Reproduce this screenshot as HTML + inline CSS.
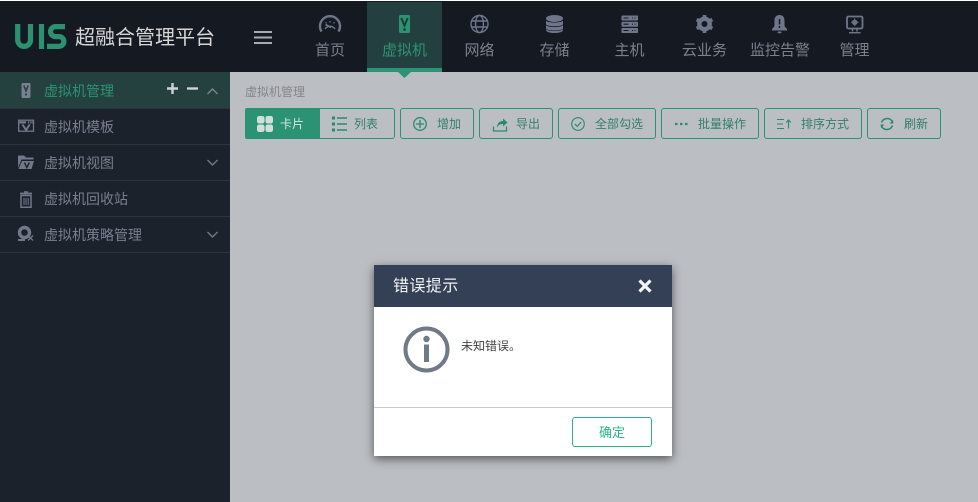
<!DOCTYPE html>
<html lang="zh"><head><meta charset="utf-8"><title>超融合管理平台</title>
<style>
html,body{margin:0;padding:0;width:978px;height:502px;overflow:hidden;background:#fff}
body{position:relative;font-family:"Liberation Sans","Noto Sans CJK SC",sans-serif;font-size:12px}
div,span{position:absolute;box-sizing:border-box;white-space:nowrap}
.nav{top:42px;width:80px;margin-left:-40px;text-align:center;font-size:15px;line-height:18px;color:#7b808d}
.row{left:0;width:230px;height:36px;border-bottom:1px solid #30353d}
.st{left:44px;font-size:14px;line-height:20px;color:#76808f}
.btn{top:108px;height:31px;border:1px solid #2b9373;border-radius:3px}
.bt{top:116px;font-size:12px;line-height:17px;color:#33806c}
svg{position:absolute;left:0;top:0}
</style></head><body>
<div style="left:0;top:1px;width:978px;height:71px;background:#151922"></div>
<div style="left:367px;top:2px;width:75px;height:70px;background:#243f3f"></div>
<div style="left:367px;top:68px;width:75px;height:4px;background:#2b9373"></div>
<div style="left:230px;top:72px;width:748px;height:430px;background:#bbbec2"></div>
<div style="left:0;top:72px;width:230px;height:430px;background:#1c222b"></div>
<div class="row" style="top:72px;background:#24403f;height:36px;border-bottom:0"></div>
<div class="row" style="top:108px;height:1px;border-bottom:1px solid #30353d"></div>
<div class="row" style="top:109px"></div>
<div class="row" style="top:145px"></div>
<div class="row" style="top:181px"></div>
<div class="row" style="top:217px"></div>

<div style="left:75px;top:23px;font-size:20px;line-height:30px;color:#d6d6d6">超融合管理平台</div>
<div class="nav" style="left:330px">首页</div>
<div class="nav" style="left:404.5px;color:#2b9373">虚拟机</div>
<div class="nav" style="left:479.5px">网络</div>
<div class="nav" style="left:554.5px">存储</div>
<div class="nav" style="left:629.5px">主机</div>
<div class="nav" style="left:704.5px">云业务</div>
<div class="nav" style="left:780px">监控告警</div>
<div class="nav" style="left:854.5px">管理</div>

<div class="st" style="top:81px;color:#2b9373">虚拟机管理</div>
<div class="st" style="top:117px">虚拟机模板</div>
<div class="st" style="top:153px">虚拟机视图</div>
<div class="st" style="top:189px">虚拟机回收站</div>
<div class="st" style="top:225px">虚拟机策略管理</div>

<div style="left:245px;top:84px;font-size:12px;line-height:17px;color:#858688">虚拟机管理</div>

<div class="btn" style="left:245px;width:150px"></div>
<div style="left:245px;top:108px;width:75px;height:31px;background:#2b9373;border-radius:2px 0 0 2px"></div>
<div class="bt" style="left:280px;color:#d8e6e0">卡片</div>
<div class="bt" style="left:354px">列表</div>
<div class="btn" style="left:400px;width:74px"></div><div class="bt" style="left:437px">增加</div>
<div class="btn" style="left:479px;width:74px"></div><div class="bt" style="left:516px">导出</div>
<div class="btn" style="left:558px;width:98px"></div><div class="bt" style="left:595px">全部勾选</div>
<div class="btn" style="left:661px;width:98px"></div><div class="bt" style="left:698px">批量操作</div>
<div class="btn" style="left:764px;width:98px"></div><div class="bt" style="left:801px">排序方式</div>
<div class="btn" style="left:867px;width:74px"></div><div class="bt" style="left:904px">刷新</div>

<svg width="978" height="502" viewBox="0 0 978 502" fill="none">
<!-- logo -->
<g stroke="#2c9170" stroke-width="5.2" fill="none">
<path d="M17.700 24v16a6.400 6.400 0 0 0 12.800 0V24"/>
<path d="M41.500 24v25"/>
<path d="M65 26.600H55.500a5 5 0 0 0 0 10h3.500a4.900 4.900 0 0 1 0 9.800H47"/>
</g>
<!-- hamburger -->
<path d="M254 32h18M254 37.500h18M254 43h18" stroke="#a8abb6" stroke-width="2"/>
<!-- arrow -->
<path d="M398 72h13l-6.500 6z" fill="#2b9373"/>
<!-- speedometer -->
<g stroke="#70768a" fill="none"><path d="M321.500 31.500A10 10 0 1 1 338.500 31.500" stroke-width="2.400"/><path d="M325 29A6 6 0 0 1 335 29" stroke-width="1.400"/><path d="M325.500 24.500l5.500 3" stroke-width="1.700"/><path d="M330 21v1.500M325.500 22.300l1 1M334.500 22.300l-1 1" stroke-width="1.200"/></g>
<!-- vm phone nav -->
<rect x="399" y="15" width="11" height="18" rx="1.500" fill="#2b9373"/>
<path d="M401.300 18l3.200 7.500 3.200-7.500" stroke="#1b3a36" stroke-width="1.900"/><circle cx="404.500" cy="29.500" r="1.300" fill="#1b3a36"/>
<!-- globe -->
<g stroke="#70768a" stroke-width="1.400" fill="none"><circle cx="479.500" cy="24" r="8.500"/><ellipse cx="479.500" cy="24" rx="4" ry="8.500"/><path d="M471.500 21h16M471.500 27h16"/></g>
<!-- database -->
<g fill="#70768a"><ellipse cx="554.500" cy="18.500" rx="8.500" ry="3.500"/><path d="M546 20.800c2 2.400 15 2.400 17 0v3.200c0 3-17 3-17 0z"/><path d="M546 25.300c2 2.400 15 2.400 17 0v3c0 3-17 3-17 0z"/><path d="M546 29.300c2 2.400 15 2.400 17 0v.7c0 4-17 4-17 0z"/></g>
<!-- server -->
<g fill="#70768a"><rect x="621.500" y="15.500" width="16.500" height="5" rx=".8"/><rect x="621.500" y="21.700" width="16.500" height="5" rx=".8"/><rect x="621.500" y="28" width="16.500" height="5" rx=".8"/></g>
<path d="M623.500 18h5M623.500 24.200h5M623.500 30.500h5M632 18h1M634.500 18h1M632 24.200h1M634.500 24.200h1M632 30.500h1M634.500 30.500h1" stroke="#151922" stroke-width="1.100"/>
<!-- gear -->
<circle cx="704.500" cy="24" r="5.200" stroke="#70768a" stroke-width="4.400"/>
<path d="M704.500 15v3.500M704.500 29.500v3.500M696.700 19.500l3 1.700M709.300 26.800l3 1.700M696.700 28.500l3-1.700M709.300 21.200l3-1.700" stroke="#70768a" stroke-width="3.600"/>
<!-- bell -->
<path d="M779.500 15c-3.500 0-5 2.500-5 5.500v4.500c0 2-1.500 2.800-2.500 4v1.500h15v-1.500c-1-1.200-2.500-2-2.500-4v-4.500c0-3-1.500-5.500-5-5.500z" fill="#70768a"/>
<rect x="777.500" y="31.500" width="4" height="1.800" rx=".9" fill="#70768a"/>
<path d="M779.500 19v5.500M779.500 26v2" stroke="#151922" stroke-width="1.500"/>
<!-- monitor -->
<rect x="847" y="16.500" width="15.500" height="12" rx="1.500" stroke="#70768a" stroke-width="1.800"/>
<circle cx="854.700" cy="22.300" r="2.700" fill="#70768a"/><circle cx="854.700" cy="22.300" r="1" fill="#151922"/>
<path d="M854.700 18.500v7.600M851 22.300h7.500" stroke="#70768a" stroke-width="1"/>
<path d="M852.500 29v2.500M857 29v2.500" stroke="#70768a" stroke-width="1.500"/><path d="M849 32.700h11.500" stroke="#70768a" stroke-width="1.400"/>

<!-- sidebar icons -->
<rect x="21.500" y="83" width="9" height="15" rx="1.200" fill="#79808e"/>
<path d="M23.800 85.500l2.200 5.500 2.200-5.500" stroke="#24403f" stroke-width="1.500"/><circle cx="26" cy="94.500" r="1.100" fill="#24403f"/>
<rect x="18.700" y="120.200" width="14.800" height="11" stroke="#70788a" stroke-width="1.300"/>
<path d="M18 122.400h8M28 122.400h1.300M30.300 122.400h1.300M32.300 122.400h1.300" stroke="#70788a" stroke-width="2.200"/>
<path d="M22.500 124.500l3.600 5.500 3.600-5.500" stroke="#70788a" stroke-width="2"/>
<path d="M18 155.500h6l2 2h7.500v2H21.500L18 168z" fill="#70788a"/>
<path d="M22 161h12l-2.500 8H18.500z" fill="#70788a"/>
<path d="M24.500 162.500l2.300 5 2.600-5" stroke="#1c222b" stroke-width="1.400"/>
<g stroke="#70788a" fill="none"><path d="M21 195.500h10v11.800h-10z" stroke-width="1.500"/><path d="M20 193.500h12" stroke-width="1.800"/><path d="M24 192h4" stroke-width="1.500"/><path d="M24 198v7M26 198v7M28.200 198v7" stroke-width="1"/></g>
<circle cx="24.500" cy="232.500" r="5" stroke="#70788a" stroke-width="3.400"/>
<path d="M18 240h7" stroke="#70788a" stroke-width="2"/>
<path d="M28 235.500l5 5M33 235.500l-5 5" stroke="#70788a" stroke-width="1.300"/>

<!-- sidebar controls -->
<path d="M167 88.500h11M172.500 83v11" stroke="#d0d3d5" stroke-width="2.400"/>
<path d="M187 88.500h11" stroke="#d0d3d5" stroke-width="2.400"/>
<path d="M207.500 94l5-5 5 5" stroke="#7d8795" stroke-width="1.400"/>
<path d="M207.500 160l5 5 5-5M207.500 232l5 5 5-5" stroke="#6f7a88" stroke-width="1.400"/>

<!-- card icon -->
<g fill="#d0dfda"><rect x="257" y="116" width="7.500" height="7.500" rx="2.200"/><rect x="265.500" y="116" width="7.500" height="7.500" rx="2.200"/><rect x="257" y="124.500" width="7.500" height="7.500" rx="2.200"/><rect x="265.500" y="124.500" width="7.500" height="7.500" rx="2.200"/></g>
<!-- list icon -->
<path d="M332 118h3M332 124h3M332 130h3" stroke="#2b8a6e" stroke-width="3"/>
<path d="M337 118h10M337 124h10M337 130h10" stroke="#2b8a6e" stroke-width="1.500"/>
<!-- add -->
<circle cx="420" cy="124" r="6.300" stroke="#2b8a6e" stroke-width="1.300"/><path d="M416 124h8M420 120v8" stroke="#2b8a6e" stroke-width="1.300"/>
<!-- export -->
<path d="M493.500 126.500v4.500h13v-4.500" stroke="#2b8a6e" stroke-width="1.300"/>
<path d="M497 128c0-5 2.500-7 6-7v-2.500l4.500 4-4.500 4V124c-3 0-5 1-6 4z" fill="#2b8a6e"/>
<!-- check -->
<circle cx="578" cy="124" r="6.300" stroke="#2b8a6e" stroke-width="1.100"/><path d="M574.800 124l2.400 2.400 4-4.400" stroke="#2b8a6e" stroke-width="1.200"/>
<!-- dots -->
<path d="M675 124h2.500M680 124h2.500M685 124h2.500" stroke="#2b8a6e" stroke-width="2.200"/>
<!-- sort -->
<path d="M777 119.500h7M777 124h6M777 128.500h7" stroke="#2b8a6e" stroke-width="1.100"/>
<path d="M788.500 128.500v-8M786.200 122.500l2.300-2.500 2.300 2.500" stroke="#2b8a6e" stroke-width="1.100"/>
<!-- refresh -->
<path d="M881.500 122.500a6 6 0 0 1 10.500-1.500M892.500 125.500a6 6 0 0 1-10.500 1.500" stroke="#2b8a6e" stroke-width="1.500"/>
<path d="M893.500 123.500h-4l3.500-3.500zM880.500 124.500h4l-3.500 3.500z" fill="#2b8a6e"/>
</svg>

<!-- modal -->
<div style="left:374px;top:265px;width:298px;height:191px;background:#fff;box-shadow:0 3px 9px rgba(0,0,0,.55)"></div>
<div style="left:374px;top:265px;width:298px;height:42px;background:#344055"></div>
<div style="left:393px;top:275px;font-size:16px;letter-spacing:.4px;line-height:24px;color:#f2f3f5">错误提示</div>
<div style="left:461px;top:337px;font-size:12px;line-height:18px;color:#444">未知错误。</div>
<div style="left:374px;top:407px;width:298px;height:1px;background:#c9c9d6"></div>
<div style="left:572px;top:417px;width:80px;height:30px;border:1px solid #2fb38a;border-radius:3px;text-align:center;font-size:13px;line-height:30px;color:#2fb38a">确定</div>
<svg width="978" height="502" viewBox="0 0 978 502" fill="none">
<path d="M639.500 280.500l11 11M650.500 280.500l-11 11" stroke="#f4f5f7" stroke-width="3.200"/>
<circle cx="426.500" cy="349.500" r="21" stroke="#707a87" stroke-width="4"/>
<circle cx="426.500" cy="339" r="3.200" fill="#707a87"/>
<rect x="424" y="344.500" width="5" height="17.500" fill="#707a87"/>
</svg>
</body></html>
